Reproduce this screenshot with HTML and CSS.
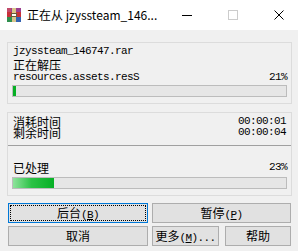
FILE: index.html
```html
<!DOCTYPE html>
<html lang="zh-CN">
<head>
    <meta charset="UTF-8">
    <meta name="viewport" content="width=device-width, initial-scale=1.0">
    <title>正在从 jzyssteam_146747.rar 解压</title>
    <link rel="stylesheet" href="styles.css">
</head>
<body>
    <div class="window">
        <div class="titlebar">
            <svg class="app-icon" width="16" height="16" viewBox="0 0 16 16">
                <rect x="1" y="1" width="14" height="4" fill="#9b3f8f"/>
                <rect x="1" y="1" width="4" height="4" fill="#c24a6a"/>
                <rect x="1" y="5" width="14" height="5" fill="#c8303a"/>
                <rect x="1" y="10" width="14" height="5" fill="#2f8f4e"/>
                <rect x="10" y="10" width="5" height="5" fill="#3462b0"/>
                <rect x="6" y="1" width="4" height="14" fill="#d8c48a"/>
                <rect x="5.5" y="6.5" width="5" height="3" fill="#ffffff" stroke="#6b5a3a" stroke-width="1"/>
            </svg>
            <span class="title">正在从 jzyssteam_146...</span>
            <div class="controls">
                <span class="ctl"><i class="min"></i></span>
                <span class="ctl"><i class="max"></i></span>
                <span class="ctl">
                    <svg width="10" height="10" viewBox="0 0 10 10">
                        <path d="M0.5 0.5 L9.5 9.5 M9.5 0.5 L0.5 9.5" stroke="#000" stroke-width="1"/>
                    </svg>
                </span>
            </div>
        </div>

        <div class="content">
            <div class="group file-group">
                <div class="row mono">jzyssteam_146747.rar</div>
                <div class="row cjk">正在解压</div>
                <div class="row split mono"><span>resources.assets.resS</span><span>21%</span></div>
                <div class="bar"><div class="fill" style="width: 3px"></div></div>
            </div>

            <div class="group">
                <div class="times">
                    <div class="row tight split"><span class="cjk">消耗时间</span><span class="mono">00:00:01</span></div>
                    <div class="row tight split"><span class="cjk">剩余时间</span><span class="mono">00:00:04</span></div>
                </div>
                <div class="processed">
                    <div class="row split"><span class="cjk">已处理</span><span class="mono">23%</span></div>
                    <div class="bar"><div class="fill glow" style="width: 41px"></div></div>
                </div>
            </div>

            <div class="buttons">
                <div class="btn-row">
                    <button class="btn focused wide">后台<span class="mono">(<u>B</u>)</span></button>
                    <button class="btn wide2">暂停<span class="mono">(<u>P</u>)</span></button>
                </div>
                <div class="btn-row">
                    <button class="btn wide">取消</button>
                    <button class="btn more">更多<span class="mono">(<u>M</u>)...</span></button>
                    <button class="btn help">帮助</button>
                </div>
            </div>
        </div>
    </div>
</body>
</html>
```

FILE: styles.css
```css
body {
    margin: 0;
    background: #f0f0f0;
    font-family: "Noto Sans CJK SC", sans-serif;
    font-size: 12px;
    color: #000;
    overflow: hidden;
}
.window {
    width: 298px;
    height: 251px;
    overflow: hidden;
}
.titlebar {
    height: 30px;
    background: #fff;
    display: flex;
    align-items: center;
}
.app-icon {
    margin-left: 6px;
    margin-right: 5px;
    margin-top: -1px;
}
.title {
    flex: 1;
    font-size: 12px;
    line-height: 30px;
    white-space: nowrap;
}
.controls {
    display: flex;
    margin-right: -4px;
}
.ctl {
    width: 46px;
    height: 30px;
    display: flex;
    align-items: center;
    justify-content: center;
}
.ctl .min {
    display: block;
    width: 10px;
    height: 1px;
    background: #000;
}
.ctl .max {
    display: block;
    width: 8px;
    height: 8px;
    border: 1px solid #cccccc;
}
.content {
    padding: 12px 6px 0 7px;
}
.group {
    border: 1px solid #dcdcdc;
}
.file-group {
    padding: 2px 4px 6px 4px;
}
.row {
    line-height: 13px;
    height: 13px;
    white-space: nowrap;
}
.row.tight {
    line-height: 11px;
    height: 11px;
}
.split {
    display: flex;
    justify-content: space-between;
}
.mono {
    font-family: "Liberation Mono", monospace;
    font-size: 11px;
    letter-spacing: -0.6px;
}
.cjk {
    font-family: "Noto Sans CJK SC", sans-serif;
    font-size: 12px;
}
.file-group .row {
    padding-left: 1px;
}
.bar {
    margin-top: 1px;
    height: 10px;
    border: 1px solid #bcbcbc;
    background: #e6e6e6;
}
.fill {
    height: 100%;
    background: #06b025;
}
.fill.glow {
    background: linear-gradient(to right, #8fe39c 0%, #2cc246 45%, #06b025 100%);
}
.group + .group {
    margin-top: 8px;
}
.times {
    padding: 3px 5px 7px 5px;
    border-bottom: 1px solid #a0a0a0;
}
.processed {
    padding: 15px 4px 6px 4px;
}
.processed .row {
    padding-left: 1px;
}
.processed .bar {
    margin-top: 3px;
}
.buttons {
    margin-top: 7px;
    margin-left: 1px;
    display: flex;
    flex-direction: column;
    gap: 3px;
}
.btn-row {
    display: flex;
    gap: 4px;
}
.btn {
    height: 20px;
    padding: 0;
    border: 1px solid #adadad;
    background: #e1e1e1;
    font-family: "Noto Sans CJK SC", sans-serif;
    font-size: 12px;
    line-height: 18px;
    color: #000;
    text-align: center;
}
.btn.focused {
    border-color: #0078d7;
    outline: 1px dotted #000;
    outline-offset: -3px;
}
.wide {
    width: 140px;
}
.wide2 {
    width: 139px;
}
.more {
    width: 67px;
}
.help {
    width: 66px;
    margin-left: 2px;
}
```
